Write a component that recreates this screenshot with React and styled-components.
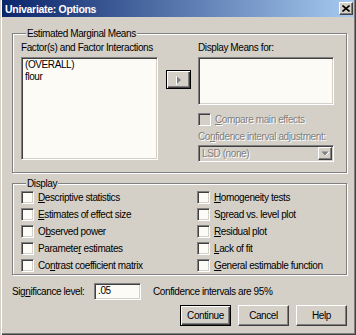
import React from "react";
import styled, { createGlobalStyle, css } from "styled-components";

const GlobalStyle = createGlobalStyle`
  html, body { margin: 0; padding: 0; background: #d4d0c8; }
  body {
    font-family: "Liberation Sans", Arial, sans-serif;
    font-size: 10px;
    letter-spacing: -0.4px;
    color: #000;
  }
  * { box-sizing: border-box; }
`;

const sunken = css`
  border: 1px solid;
  border-color: #808080 #ffffff #ffffff #808080;
  box-shadow: inset 1px 1px 0 #404040, inset -1px -1px 0 #d4d0c8;
`;

const raised = css`
  border: 1px solid;
  border-color: #ffffff #404040 #404040 #ffffff;
  box-shadow: inset -1px -1px 0 #808080, inset 1px 1px 0 #d4d0c8;
  background: #d4d0c8;
`;

const Window = styled.div`
  width: 356px;
  height: 335px;
  background: #d4d0c8;
  display: flex;
  flex-direction: column;
  box-shadow: inset 1px 0 0 #d4d0c8, inset 2px 0 0 #ffffff,
    inset -1px -1px 0 #404040, inset -2px -2px 0 #808080;
`;

const TitleBar = styled.div`
  height: 17px;
  margin: 0 2px;
  padding: 0 1px 0 3px;
  display: flex;
  align-items: center;
  background: linear-gradient(to right, #0a246a, #a6caf0);
  color: #fff;
  font-weight: bold;
  font-size: 10.5px;
  letter-spacing: -0.3px;
`;

const TitleText = styled.div`
  flex: 1;
  white-space: nowrap;
`;

const CloseButton = styled.div`
  ${raised};
  width: 14px;
  height: 13px;
  display: flex;
  align-items: center;
  justify-content: center;
`;

const Body = styled.div`
  display: flex;
  flex-direction: column;
  padding: 0 9px 0 12px;
`;

const Group = styled.div`
  margin-top: ${(p) => p.$top}px;
  border: 1px solid #808080;
  box-shadow: inset 1px 1px 0 #ffffff, 1px 1px 0 #ffffff;
  padding: 0 0 ${(p) => p.$bottom || 0}px 8px;
`;

const GroupTitle = styled.div`
  width: fit-content;
  margin: -7px 0 0 5px;
  padding: 0 1px;
  line-height: 13px;
  height: 13px;
  background: #d4d0c8;
  white-space: nowrap;
`;

const MeansRow = styled.div`
  display: flex;
  align-items: flex-start;
`;

const Column = styled.div`
  width: ${(p) => p.$w}px;
  margin-left: ${(p) => p.$ml || 0}px;
  display: flex;
  flex-direction: column;
`;

const Label = styled.div`
  line-height: 13px;
  height: 13px;
  margin-top: ${(p) => p.$mt || 0}px;
  white-space: nowrap;
  ${(p) =>
    p.$disabled &&
    css`
      color: #808080;
      text-shadow: 1px 1px 0 #ffffff;
    `}
`;

const ListBox = styled.div`
  ${sunken};
  background: #fcfbf5;
  height: ${(p) => p.$h}px;
  margin-top: 3px;
  padding: 1px 3px;
`;

const ListItem = styled.div`
  line-height: 12px;
  white-space: nowrap;
`;

const ArrowButton = styled.div`
  width: 25px;
  height: 19px;
  margin: 30px 0 0 8px;
  border: 1px solid #000;
  background: #d4d0c8;
  box-shadow: inset 1px 1px 0 #ffffff, inset -1px -1px 0 #404040,
    inset -2px -2px 0 #808080;
  display: flex;
  align-items: center;
  justify-content: center;
`;

const CheckRow = styled.div`
  display: flex;
  align-items: center;
  gap: 4px;
  height: ${(p) => p.$h || 17}px;
  margin-top: ${(p) => p.$mt || 0}px;
  white-space: nowrap;
  ${(p) =>
    p.$disabled &&
    css`
      color: #808080;
      text-shadow: 1px 1px 0 #ffffff;
    `}
`;

const CheckBox = styled.span`
  ${sunken};
  width: 13px;
  height: 13px;
  flex: none;
  background: ${(p) => (p.$disabled ? "#d4d0c8" : "#fcfbf5")};
`;

const Combo = styled.div`
  ${sunken};
  margin-top: 2px;
  height: 17px;
  display: flex;
  align-items: center;
  padding: 1px;
  background: #d4d0c8;
`;

const ComboText = styled.div`
  flex: 1;
  padding-left: 2px;
  color: #808080;
  text-shadow: 1px 1px 0 #ffffff;
  white-space: nowrap;
`;

const ComboButton = styled.div`
  ${raised};
  width: 14px;
  height: 13px;
  display: flex;
  align-items: center;
  justify-content: center;
`;

const DisplayGrid = styled.div`
  display: grid;
  grid-template-columns: 176px 1fr;
  grid-auto-flow: column;
  grid-template-rows: repeat(5, 17px);
  margin-top: -1px;
`;

const SigRow = styled.div`
  display: flex;
  align-items: center;
  height: 17px;
  margin-top: 8px;
  white-space: nowrap;
`;

const SigLabel = styled.div`
  width: 82px;
`;

const SigInput = styled.div`
  ${sunken};
  width: 47px;
  height: 17px;
  background: #fcfbf5;
  padding: 0 3px;
  line-height: 14px;
`;

const SigNote = styled.div`
  margin-left: 12px;
`;

const ButtonRow = styled.div`
  display: flex;
  justify-content: flex-end;
  gap: 7px;
  margin-top: 5px;
`;

const Button = styled.div`
  width: 51px;
  height: 21px;
  display: flex;
  align-items: center;
  justify-content: center;
  background: #d4d0c8;
  ${(p) =>
    p.$default
      ? css`
          border: 1px solid #000;
          box-shadow: inset 1px 1px 0 #ffffff, inset -1px -1px 0 #404040,
            inset -2px -2px 0 #808080;
        `
      : raised}
`;

const RightTriangle = () => (
  <svg width="7" height="10" viewBox="0 0 7 10">
    <polygon points="1,0.5 6,5 1,9.5" fill="#808080" />
    <line x1="1.5" y1="1" x2="1.5" y2="10" stroke="#ffffff" strokeWidth="1" />
  </svg>
);

const DownTriangle = () => (
  <svg width="8" height="5" viewBox="0 0 8 5">
    <polygon points="0.5,0.5 7.5,0.5 4,4.5" fill="#808080" />
    <line x1="4.5" y1="4.5" x2="8" y2="1" stroke="#ffffff" strokeWidth="1" />
  </svg>
);

const CloseX = () => (
  <svg width="8" height="7" viewBox="0 0 8 7">
    <path d="M0.5 0.5 L7.5 6.5 M7.5 0.5 L0.5 6.5" stroke="#000" strokeWidth="1.6" />
  </svg>
);

const leftOptions = [
  [<u key="d">D</u>, "escriptive statistics"],
  [<u key="e">E</u>, "stimates of effect size"],
  ["O", <u key="b">b</u>, "served power"],
  ["Paramete", <u key="r">r</u>, " estimates"],
  ["Co", <u key="n">n</u>, "trast coefficient matrix"],
];

const rightOptions = [
  [<u key="h">H</u>, "omogeneity tests"],
  ["S", <u key="p">p</u>, "read vs. level plot"],
  [<u key="r">R</u>, "esidual plot"],
  [<u key="l">L</u>, "ack of fit"],
  [<u key="g">G</u>, "eneral estimable function"],
];

export default function App() {
  return (
    <>
      <GlobalStyle />
      <Window>
        <TitleBar>
          <TitleText>Univariate: Options</TitleText>
          <CloseButton>
            <CloseX />
          </CloseButton>
        </TitleBar>
        <Body>
          <Group $top={16} $bottom={10}>
            <GroupTitle>Estimated Marginal Means</GroupTitle>
            <MeansRow>
              <Column $w={137}>
                <Label $mt={1}>Factor(s) and Factor Interactions</Label>
                <ListBox $h={103}>
                  <ListItem>(OVERALL)</ListItem>
                  <ListItem>flour</ListItem>
                </ListBox>
              </Column>
              <ArrowButton>
                <RightTriangle />
              </ArrowButton>
              <Column $w={136} $ml={7}>
                <Label $mt={1}>Display Means for:</Label>
                <ListBox $h={48} />
                <CheckRow $disabled $h={13} $mt={8}>
                  <CheckBox $disabled />
                  <span>
                    <u>C</u>ompare main effects
                  </span>
                </CheckRow>
                <Label $mt={4} $disabled>
                  Co<u>n</u>fidence interval adjustment:
                </Label>
                <Combo>
                  <ComboText>LSD (none)</ComboText>
                  <ComboButton>
                    <DownTriangle />
                  </ComboButton>
                </Combo>
              </Column>
            </MeansRow>
          </Group>
          <Group $top={10}>
            <GroupTitle>Display</GroupTitle>
            <DisplayGrid>
              {leftOptions.concat(rightOptions).map((parts, i) => (
                <CheckRow key={i}>
                  <CheckBox />
                  <span>{parts}</span>
                </CheckRow>
              ))}
            </DisplayGrid>
          </Group>
          <SigRow>
            <SigLabel>
              Sig<u>n</u>ificance level:
            </SigLabel>
            <SigInput>.05</SigInput>
            <SigNote>Confidence intervals are 95%</SigNote>
          </SigRow>
          <ButtonRow>
            <Button $default>Continue</Button>
            <Button>Cancel</Button>
            <Button>Help</Button>
          </ButtonRow>
        </Body>
      </Window>
    </>
  );
}
